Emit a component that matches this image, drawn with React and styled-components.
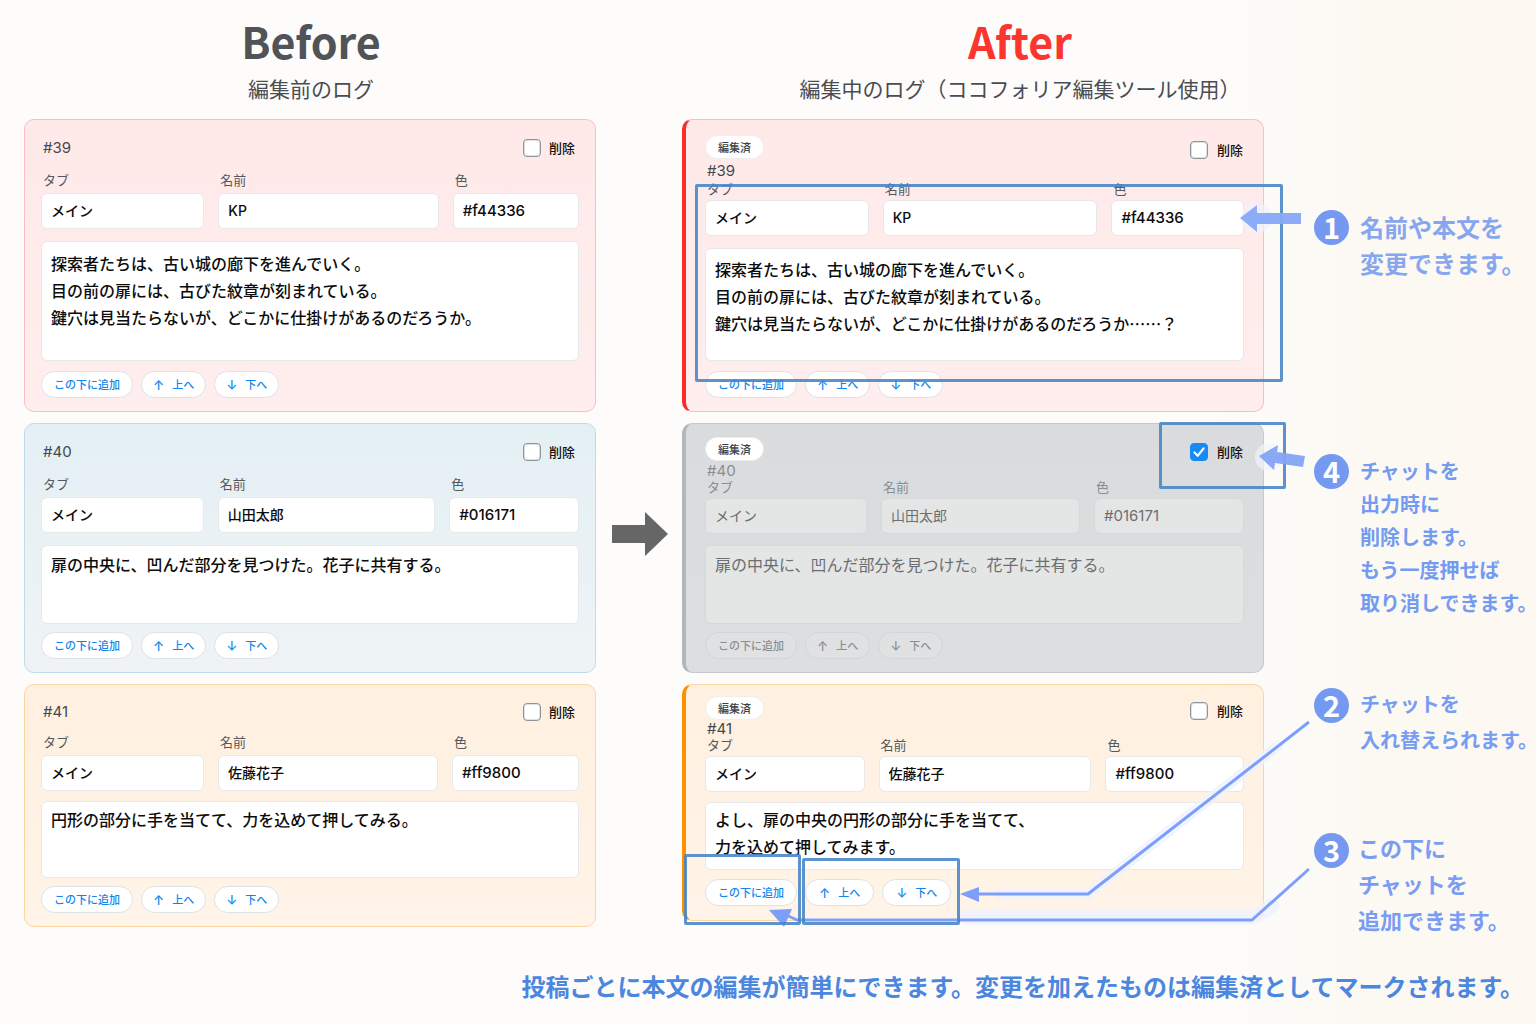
import React, { useId, useState } from "react";
import styled, { createGlobalStyle, css } from "styled-components";

const GlobalStyle = createGlobalStyle`
  *, *::before, *::after { box-sizing: border-box; }
  body {
    margin: 0;
    min-height: 100vh;
    background: linear-gradient(90deg, #fdfcfa 0%, #fdfcfa 78%, #fcf9f3 90%, #fdf8f1 100%);
    color: #111;
    font-family: "Noto Sans CJK JP", "Noto Sans", sans-serif;
    font-size: 14px;
  }
  h1, h2, p { margin: 0; }
  button, input, textarea { font-family: inherit; margin: 0; }
`;

const uiFont = `Inter, "Noto Sans CJK JP", sans-serif`;

const tones = {
  red: { bg: "linear-gradient(#ffe9e9, #feeeed)", line: "#fbbdbf", accent: "#fb2c2c" },
  blue: { bg: "linear-gradient(#e4f0f4, #eff3f6)", line: "#c0dbe8", accent: "#016171" },
  orange: { bg: "linear-gradient(#fff0e0, #fff4e8)", line: "#fcd6a2", accent: "#ff9100" },
  muted: { bg: "linear-gradient(#d9dbdd, #dcdfe1)", line: "#c6cacd", accent: "#b3b7bc" },
};

const Page = styled.main`
  padding: 10px 0 20px 24px;
`;

const Row = styled.section`
  display: grid;
  grid-template-columns: minmax(0, 572fr) 86px minmax(0, 582fr) 272px;
  align-items: start;
  margin-bottom: ${(p) => p.$gap || 0}px;
`;

const Heading = styled.header`
  grid-column: ${(p) => p.$col};
  padding-left: ${(p) => p.$shift || 0}px;
  text-align: center;
  white-space: nowrap;
`;

const Title = styled.h1`
  font-size: 43px;
  line-height: 60px;
  font-weight: 700;
  color: ${(p) => p.$color};
`;

const Subtitle = styled.p`
  font-size: 21px;
  line-height: 36px;
  color: #4a4d52;
`;

const CardShell = styled.article`
  position: relative;
  display: flex;
  flex-direction: column;
  padding: ${(p) => p.$top}px ${(p) => (p.$edited ? 19 : 16)}px ${(p) => p.$bottom}px
    ${(p) => (p.$edited ? 19 : 16)}px;
  border: 1px solid ${(p) => p.$tone.line};
  border-radius: 10px;
  background: ${(p) => p.$tone.bg};
  ${(p) =>
    p.$edited &&
    css`
      border-left: 4px solid ${p.$tone.accent};
    `}
`;

const CardHead = styled.div`
  display: flex;
  justify-content: space-between;
  align-items: flex-start;
  margin-bottom: ${(p) => p.$gap}px;
`;

const Ident = styled.div`
  display: flex;
  flex-direction: column;
  align-items: flex-start;
  gap: ${(p) => p.$gap}px;
`;

const Badge = styled.span`
  height: 24px;
  padding: 0 12px;
  border-radius: 12px;
  border: 1px solid #eceeef;
  background: #fff;
  color: #3c4045;
  font-size: 11px;
  font-weight: 500;
  line-height: 22px;
`;

const Num = styled.span`
  padding-left: 2px;
  font-family: ${uiFont};
  font-size: 15px;
  line-height: ${(p) => (p.$edited ? 16 : 20)}px;
  color: ${(p) => (p.$muted ? "#8b8e91" : "#45494e")};
`;

const DeleteLabel = styled.label`
  display: flex;
  align-items: center;
  gap: ${(p) => (p.$edited ? 9 : 8)}px;
  padding: ${(p) => (p.$edited ? 5 : 0)}px ${(p) => (p.$edited ? 1 : 4)}px 0 0;
  font-size: 13px;
  line-height: 20px;
  font-weight: 500;
  color: #111;
`;

const Tick = styled.span`
  position: relative;
  display: flex;
  width: 18px;
  height: 18px;
`;

const TickBox = styled.input`
  appearance: none;
  width: 18px;
  height: 18px;
  border: 1px solid #8c949b;
  border-radius: 4px;
  background: #fff;
  box-shadow: inset 0 0 0 1px #dfe2e5;
  &:checked {
    border-color: #168af6;
    background: #168af6;
    box-shadow: none;
  }
`;

const TickMark = styled.svg`
  position: absolute;
  inset: 0;
  pointer-events: none;
`;

const Fields = styled.div`
  display: grid;
  grid-template-columns: ${(p) => p.$cols};
  gap: 14px;
  margin-bottom: ${(p) => p.$gap}px;
`;

const Field = styled.label`
  display: flex;
  flex-direction: column;
  gap: ${(p) => p.$gap}px;
  min-width: 0;
  font-size: 13px;
  line-height: 16px;
  color: ${(p) => (p.$muted ? "#8b8e91" : "#55595e")};
`;

const FieldName = styled.span`
  padding-left: 2px;
`;

const box = css`
  width: 100%;
  border: 1px solid ${(p) => (p.$muted ? "#d6d8da" : "#e6e8ea")};
  border-radius: 6px;
  background: ${(p) => (p.$muted ? "#e4e5e5" : "#fff")};
  color: ${(p) => (p.$muted ? "#6c6e71" : "#0c0c0c")};
  outline: none;
`;

const TextInput = styled.input`
  ${box}
  height: 36px;
  padding: 0 9px 2px;
  font-family: ${uiFont};
  font-size: ${(p) => (p.$code ? 15 : 14)}px;
  font-weight: ${(p) => (p.$muted ? 400 : 500)};
`;

const Body = styled.textarea`
  ${box}
  display: block;
  height: ${(p) => p.$h}px;
  padding: ${(p) => p.$top}px 9px 0;
  resize: none;
  overflow: hidden;
  font-size: 16px;
  line-height: 27px;
  font-weight: ${(p) => (p.$muted ? 400 : 500)};
`;

const Actions = styled.div`
  display: flex;
  gap: 8px;
  margin-top: ${(p) => p.$gap}px;
`;

const Pill = styled.button`
  display: flex;
  align-items: center;
  gap: 8px;
  height: 27px;
  padding: 0 ${(p) => p.$pad || 12}px;
  border: 1px solid ${(p) => (p.$muted ? "#d3d5d7" : "#dde2e6")};
  border-radius: 14px;
  background: ${(p) => (p.$muted ? "#e0e1e2" : "#fff")};
  color: ${(p) => (p.$muted ? "#8b8e91" : "#0f85ee")};
  font-family: ${uiFont};
  font-size: 11px;
  font-weight: 500;
  line-height: 16px;
  white-space: nowrap;
`;

const PillArrow = styled.span`
  font-size: 13px;
`;

const Frame = styled.span`
  position: absolute;
  top: ${(p) => p.$t}px;
  height: ${(p) => p.$h}px;
  left: ${(p) => p.$l};
  right: ${(p) => p.$r};
  width: ${(p) => p.$w || "auto"};
  border: 3px solid #4583c6;
  border-radius: 2px;
  opacity: 0.87;
  pointer-events: none;
`;

const Callout = styled.svg`
  position: absolute;
  top: ${(p) => p.$t}px;
  right: ${(p) => p.$r}px;
  pointer-events: none;
  overflow: visible;
`;

const Middle = styled.div`
  align-self: center;
  display: flex;
  justify-content: center;
  padding: 0 0 28px 2px;
`;

const Notes = styled.div`
  display: flex;
  flex-direction: column;
  gap: 71px;
  padding: ${(p) => p.$top}px 0 0 50px;
`;

const Note = styled.div`
  display: flex;
  align-items: flex-start;
  gap: ${(p) => p.$gap || 11}px;
  font-size: ${(p) => p.$size}px;
  line-height: ${(p) => p.$lh}px;
  font-weight: 700;
  color: ${(p) => p.$color};
  white-space: nowrap;
`;

const Disc = styled.span`
  flex: none;
  width: 35px;
  height: 35px;
  margin-top: ${(p) => p.$drop || 0}px;
  border-radius: 50%;
  background: #7599f1;
  color: #fff;
  font-size: 29px;
  font-weight: 700;
  line-height: 33px;
  text-align: center;
`;

const Summary = styled.p`
  padding-right: 12px;
  text-align: right;
  font-size: 24px;
  line-height: 36px;
  font-weight: 700;
  color: #4b86df;
`;

function LogCard({ id, tone, edited, removed = false, name, color, text, cols, space, children }) {
  const [deleted, setDeleted] = useState(removed);
  const bodyId = useId();
  const muted = deleted;
  return (
    <CardShell $tone={deleted ? tones.muted : tones[tone]} $edited={edited} $top={space.top} $bottom={space.bottom}>
      <CardHead $gap={space.head}>
        <Ident $gap={space.ident}>
          {edited && <Badge>編集済</Badge>}
          <Num $edited={edited} $muted={muted}>#{id}</Num>
        </Ident>
        <DeleteLabel $edited={edited}>
          <Tick>
            <TickBox type="checkbox" checked={deleted} onChange={(e) => setDeleted(e.target.checked)} />
            {deleted && (
              <TickMark viewBox="0 0 18 18" width="18" height="18">
                <path d="M4.5 9.4 7.7 12.8 13.6 5.4" fill="none" stroke="#fff" strokeWidth="2.2" strokeLinecap="round" strokeLinejoin="round" />
              </TickMark>
            )}
          </Tick>
          削除
        </DeleteLabel>
      </CardHead>
      <Fields $cols={cols} $gap={space.fields}>
        {[["タブ", "メイン"], ["名前", name], ["色", color]].map(([label, value]) => (
          <Field key={label} $muted={muted} $gap={edited ? 3 : 5}>
            <FieldName>{label}</FieldName>
            <TextInput $muted={muted} $code={value === color} defaultValue={value} />
          </Field>
        ))}
      </Fields>
      <Body id={bodyId} aria-label="本文" $muted={muted} $h={space.body} $top={space.text} defaultValue={text} spellCheck={false} />
      <Actions $gap={space.actions}>
        <Pill type="button" $muted={muted}>この下に追加</Pill>
        <Pill type="button" $muted={muted} $pad={space.mover}><PillArrow>↑</PillArrow>上へ</Pill>
        <Pill type="button" $muted={muted} $pad={space.mover}><PillArrow>↓</PillArrow>下へ</Pill>
      </Actions>
      {children}
    </CardShell>
  );
}

const Lines = ({ text }) => (
  <p>
    {text.split("\n").map((line, i) => (
      <React.Fragment key={line}>
        {i > 0 && <br />}
        {line}
      </React.Fragment>
    ))}
  </p>
);

const introText = "探索者たちは、古い城の廊下を進んでいく。\n目の前の扉には、古びた紋章が刻まれている。\n鍵穴は見当たらないが、どこかに仕掛けがあるのだろうか";
const doorText = "扉の中央に、凹んだ部分を見つけた。花子に共有する。";

export default function App() {
  return (
    <Page>
      <GlobalStyle />
      <Row $gap={13}>
        <Heading $col={1} $shift={2}>
          <Title $color="#505357">Before</Title>
          <Subtitle>編集前のログ</Subtitle>
        </Heading>
        <Heading $col={3} $shift={94}>
          <Title $color="#fb3631">After</Title>
          <Subtitle>編集中のログ（ココフォリア編集ツール使用）</Subtitle>
        </Heading>
      </Row>

      <Row $gap={11}>
        <LogCard
          id={39} tone="red" name="KP" color="#f44336" text={introText + "。"}
          cols="163fr 220fr 126fr"
          space={{ top: 18, head: 14, ident: 0, fields: 12, body: 120, text: 8, actions: 10, bottom: 13, mover: 11 }}
        />
        <span />
        <LogCard
          id={39} tone="red" edited name="KP" color="#f44336" text={introText + "……？"}
          cols="163fr 214fr 132fr"
          space={{ top: 15, head: 2, ident: 4, fields: 12, body: 113, text: 7, actions: 10, bottom: 13, mover: 11 }}
        >
          <Frame $t={64} $h={198} $l="9px" $r="-20px" />
          <Callout $t={76} $r={-41} width="72" height="44" viewBox="1232 196 72 44">
            <ellipse cx="1257" cy="218" rx="16" ry="15" fill="#eef2ff" opacity="0.7" />
            <path d="M1240 218 1257 205v8h44v11h-44v8z" fill="#87a8f8" opacity="0.95" />
          </Callout>
        </LogCard>
        <Notes $top={90}>
          <Note $size={24} $lh={36} $color="#86a7ef">
            <Disc $drop={1}>1</Disc>
            <Lines text={"名前や本文を\n変更できます。"} />
          </Note>
        </Notes>
      </Row>

      <Row $gap={11}>
        <LogCard
          id={40} tone="blue" name="山田太郎" color="#016171" text={doorText}
          cols="163fr 218fr 130fr"
          space={{ top: 18, head: 14, ident: 0, fields: 12, body: 79, text: 5, actions: 8, bottom: 13, mover: 11 }}
        />
        <Middle>
          <svg width="56" height="44" viewBox="0 0 56 44" aria-hidden="true">
            <path d="M0 13h33V0l23 22-23 22V31H0z" fill="#666" />
          </svg>
        </Middle>
        <LogCard
          id={40} tone="blue" edited removed name="山田太郎" color="#016171" text={doorText}
          cols="162fr 199fr 150fr"
          space={{ top: 13, head: 0, ident: 2, fields: 11, body: 79, text: 5, actions: 8, bottom: 13, mover: 11 }}
        >
          <Frame $t={-2} $h={67} $l="auto" $r="-23px" $w="127px" />
          <Callout $t={16} $r={-43} width="60" height="40" viewBox="1246 440 60 40">
            <ellipse cx="1269" cy="457" rx="14" ry="14" fill="#f3f5fb" opacity="0.65" />
            <path d="M1259 456 1278 445 1277 452 1305 456 1303 467 1275 463 1274 470z" fill="#83a3f6" opacity="0.95" />
          </Callout>
        </LogCard>
        <Notes $top={31}>
          <Note $size={20} $lh={33} $color="#739bf1">
            <Disc>4</Disc>
            <Lines text={"チャットを\n出力時に\n削除します。\nもう一度押せば\n取り消しできます。"} />
          </Note>
        </Notes>
      </Row>

      <Row $gap={31}>
        <LogCard
          id={41} tone="orange" name="佐藤花子" color="#ff9800" text="円形の部分に手を当てて、力を込めて押してみる。"
          cols="163fr 220fr 127fr"
          space={{ top: 17, head: 12, ident: 0, fields: 10, body: 77, text: 4, actions: 8, bottom: 13, mover: 11 }}
        />
        <span />
        <LogCard
          id={41} tone="orange" edited name="佐藤花子" color="#ff9800" text={"よし、扉の中央の円形の部分に手を当てて、\n力を込めて押してみます。"}
          cols="159fr 212fr 138fr"
          space={{ top: 11, head: 0, ident: 1, fields: 10, body: 68, text: 3, actions: 9, bottom: 14, mover: 13 }}
        >
          <Callout $t={25} $r={-53} width="560" height="220" viewBox="756 710 560 220">
            <g fill="none" strokeLinejoin="round">
              <path d="M1278 746 1088 894H1000" stroke="#edf1ff" strokeWidth="11" opacity="0.75" strokeLinecap="round" />
              <path d="M1272 906 1254 917H966" stroke="#edf1ff" strokeWidth="15" opacity="0.75" strokeLinecap="round" />
              <path d="M1309 722 1088 894H976" stroke="#7c9ffb" strokeWidth="3" />
              <path d="M1309 869 1252 920H797L784 914" stroke="#7c9ffb" strokeWidth="3" />
            </g>
            <path d="M960 894 979 887V902z" fill="#7c9ffb" />
            <path d="M769 910 792 909 784 927z" fill="#7c9ffb" />
          </Callout>
          <Frame $t={169} $h={71} $l="-2px" $r="auto" $w="117px" />
          <Frame $t={173} $h={67} $l="116px" $r="auto" $w="158px" />
        </LogCard>
        <Notes $top={2}>
          <Note $size={20} $lh={36} $color="#779cf4">
            <Disc $drop={2}>2</Disc>
            <Lines text={"チャットを\n入れ替えられます。"} />
          </Note>
          <Note $size={22} $lh={36} $gap={9} $color="#7a9df3">
            <Disc $drop={4}>3</Disc>
            <Lines text={"この下に\nチャットを\n追加できます。"} />
          </Note>
        </Notes>
      </Row>

      <Summary>投稿ごとに本文の編集が簡単にできます。変更を加えたものは編集済としてマークされます。</Summary>
    </Page>
  );
}
